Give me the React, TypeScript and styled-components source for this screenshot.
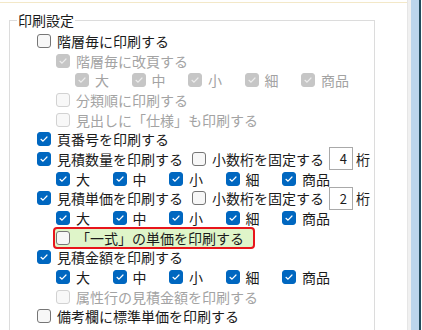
import React from "react";
import styled, { createGlobalStyle, css } from "styled-components";

const GlobalStyle = createGlobalStyle`
  html, body { margin: 0; padding: 0; background: #ffffff; }
  body { font-family: "Noto Sans CJK JP", "Noto Sans", sans-serif; color: #1b1b1b; }
  * { box-sizing: border-box; }
`;

const Frame = styled.div`
  display: flex;
  width: 422px;
  height: 330px;
  overflow: hidden;
  background: #ffffff;
`;

const Main = styled.div`
  width: 407px;
  height: 330px;
  overflow: hidden;
  padding-top: 2px;
`;

const TopLine = styled.div`
  height: 1px;
  background: #f3e8c8;
`;

const ScrollStrip = styled.div`
  display: flex;
  width: 15px;
  height: 330px;
`;

const StripBand = styled.div<{ $w: number; $c: string }>`
  width: ${(p) => p.$w}px;
  background: ${(p) => p.$c};
`;

const Group = styled.fieldset`
  margin: 9px 0 0 9px;
  width: 366px;
  height: 360px;
  padding: 3px 0 0 0;
  border: 1px solid #dcdcdc;
  min-width: 0;
`;

const Legend = styled.legend`
  margin-left: 7px;
  padding: 0 1px;
  font-size: 14px;
  line-height: 16px;
  color: #1b1b1b;
`;

const Row = styled.div<{ $indent: number }>`
  display: flex;
  align-items: center;
  height: 19.7px;
  padding-left: ${(p) => 27 + p.$indent * 19}px;
  white-space: nowrap;
`;

const Option = styled.div<{ $width?: number }>`
  display: flex;
  align-items: center;
  gap: 6px;
  flex: none;
  ${(p) =>
    p.$width !== undefined &&
    css`
      width: ${p.$width}px;
    `}
`;

const Label = styled.span<{ $disabled?: boolean }>`
  font-size: 14px;
  line-height: 16px;
  color: ${(p) => (p.$disabled ? "#a3a3a3" : "#1b1b1b")};
`;

type BoxState = "on" | "off";

const Box = styled.span<{ $checked: boolean; $disabled: boolean }>`
  display: inline-flex;
  align-items: center;
  justify-content: center;
  width: 14px;
  height: 14px;
  border-radius: 3px;
  flex: none;
  ${(p) => {
    if (p.$checked && !p.$disabled)
      return css`
        background: #0067c0;
        border: 1px solid #0067c0;
      `;
    if (p.$checked && p.$disabled)
      return css`
        background: #c6c6c6;
        border: 1px solid #c6c6c6;
      `;
    if (!p.$checked && p.$disabled)
      return css`
        background: #f8f8f8;
        border: 1px solid #d2d2d2;
      `;
    return css`
      background: #f7f7f7;
      border: 1px solid #767676;
    `;
  }}
`;

const Check: React.FC<{ state: BoxState; disabled?: boolean }> = ({ state, disabled = false }) => (
  <Box $checked={state === "on"} $disabled={disabled}>
    {state === "on" && (
      <svg width="12" height="12" viewBox="0 0 12 12">
        <path
          d="M3 6.3 L5 8.2 L9 4"
          fill="none"
          stroke={disabled ? "#ececec" : "#ffffff"}
          strokeWidth="1.2"
          strokeLinecap="round"
          strokeLinejoin="round"
        />
      </svg>
    )}
  </Box>
);

const CheckItem: React.FC<{ state: BoxState; disabled?: boolean; width?: number; children: React.ReactNode }> = ({
  state,
  disabled,
  width,
  children,
}) => (
  <Option $width={width}>
    <Check state={state} disabled={disabled} />
    <Label $disabled={disabled}>{children}</Label>
  </Option>
);

const Spacer = styled.span<{ $w: number }>`
  display: inline-block;
  width: ${(p) => p.$w}px;
  flex: none;
`;

const NumBox = styled.span`
  display: inline-flex;
  align-items: center;
  justify-content: flex-end;
  width: 24px;
  height: 23px;
  margin: 0 3px 0 5px;
  padding-right: 5px;
  border: 1px solid #a9a9a9;
  background: #ffffff;
  font-family: "Noto Sans CJK JP", sans-serif;
  font-size: 13px;
  color: #1b1b1b;
  flex: none;
`;

const Highlight = styled.div`
  display: flex;
  align-items: center;
  gap: 6px;
  height: 22px;
  width: 202px;
  margin-left: -3px;
  padding-left: 1px;
  border: 2px solid #e8151b;
  border-radius: 4px;
  background: #dff5c9;
`;

const SIZES = ["大", "中", "小", "細", "商品"];

const SizeRow: React.FC<{ indent: number; disabled?: boolean }> = ({ indent, disabled }) => (
  <Row $indent={indent}>
    {SIZES.map((s) => (
      <CheckItem key={s} state="on" disabled={disabled} width={56.5}>
        {s}
      </CheckItem>
    ))}
  </Row>
);

const DecimalControl: React.FC<{ digits: string }> = ({ digits }) => (
  <>
    <Spacer $w={9} />
    <CheckItem state="off">小数桁を固定する</CheckItem>
    <NumBox>{digits}</NumBox>
    <Label>桁</Label>
  </>
);

export default function App() {
  return (
    <>
      <GlobalStyle />
      <Frame>
        <Main>
          <TopLine />
          <Group>
            <Legend>印刷設定</Legend>
            <Row $indent={0}>
              <CheckItem state="off">階層毎に印刷する</CheckItem>
            </Row>
            <Row $indent={1}>
              <CheckItem state="on" disabled>
                階層毎に改頁する
              </CheckItem>
            </Row>
            <SizeRow indent={2} disabled />
            <Row $indent={1}>
              <CheckItem state="off" disabled>
                分類順に印刷する
              </CheckItem>
            </Row>
            <Row $indent={1}>
              <CheckItem state="off" disabled>
                見出しに「仕様」も印刷する
              </CheckItem>
            </Row>
            <Row $indent={0}>
              <CheckItem state="on">頁番号を印刷する</CheckItem>
            </Row>
            <Row $indent={0}>
              <CheckItem state="on">見積数量を印刷する</CheckItem>
              <DecimalControl digits="4" />
            </Row>
            <SizeRow indent={1} />
            <Row $indent={0}>
              <CheckItem state="on">見積単価を印刷する</CheckItem>
              <DecimalControl digits="2" />
            </Row>
            <SizeRow indent={1} />
            <Row $indent={1}>
              <Highlight>
                <Check state="off" />
                <Label>「一式」の単価を印刷する</Label>
              </Highlight>
            </Row>
            <Row $indent={0}>
              <CheckItem state="on">見積金額を印刷する</CheckItem>
            </Row>
            <SizeRow indent={1} />
            <Row $indent={1}>
              <CheckItem state="off" disabled>
                属性行の見積金額を印刷する
              </CheckItem>
            </Row>
            <Row $indent={0}>
              <CheckItem state="off">備考欄に標準単価を印刷する</CheckItem>
            </Row>
          </Group>
        </Main>
        <ScrollStrip>
          <StripBand $w={1} $c="#e6e6e6" />
          <StripBand $w={3} $c="#f0f0f0" />
          <StripBand $w={8} $c="#bcd5ec" />
          <StripBand $w={2} $c="#234b5d" />
          <StripBand $w={1} $c="#ffffff" />
        </ScrollStrip>
      </Frame>
    </>
  );
}
